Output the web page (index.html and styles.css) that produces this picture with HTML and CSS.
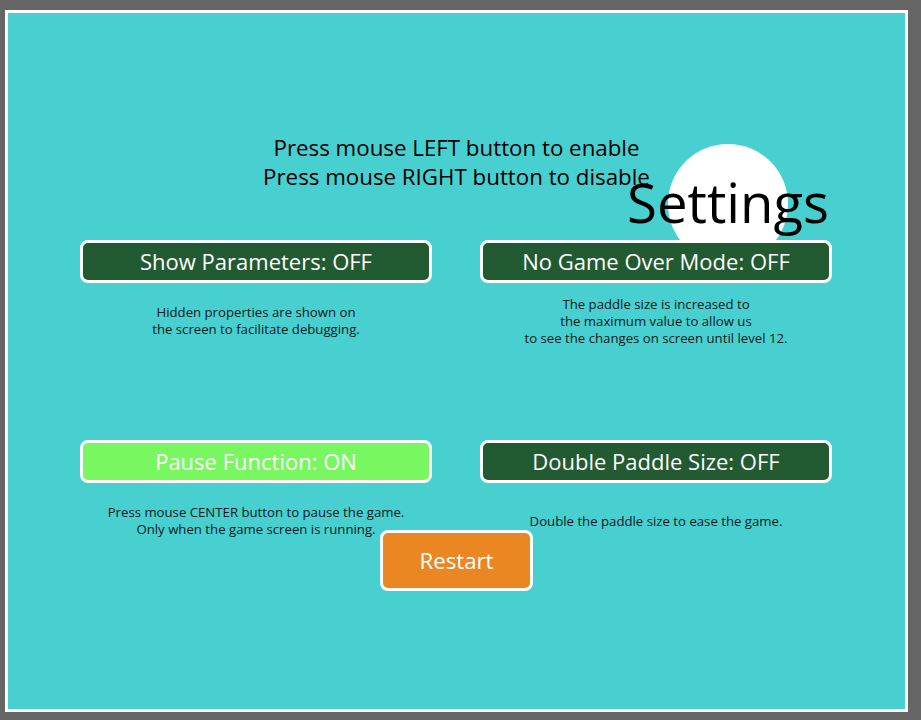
FILE: index.html
```html
<!DOCTYPE html>
<html>
<head>
<meta charset="utf-8">
<link rel="stylesheet" href="styles.css">
</head>
<body>
<div class="frame">
  <div class="title-deco">
    <div class="circle"></div>
    <div class="title">Settings</div>
  </div>
  <div class="heading">
    <div>Press mouse LEFT button to enable</div>
    <div>Press mouse RIGHT button to disable</div>
  </div>
  <div class="grid">
    <div class="cell">
      <div class="toggle off">Show Parameters: OFF</div>
      <div class="desc">Hidden properties are shown on<br>the screen to facilitate debugging.</div>
    </div>
    <div class="cell">
      <div class="toggle off">No Game Over Mode: OFF</div>
      <div class="desc">The paddle size is increased to<br>the maximum value to allow us<br>to see the changes on screen until level 12.</div>
    </div>
    <div class="cell">
      <div class="toggle on">Pause Function: ON</div>
      <div class="desc">Press mouse CENTER button to pause the game.<br>Only when the game screen is running.</div>
    </div>
    <div class="cell">
      <div class="toggle off">Double Paddle Size: OFF</div>
      <div class="desc">Double the paddle size to ease the game.</div>
    </div>
  </div>
  <div class="restart">Restart</div>
</div>
</body>
</html>
```

FILE: styles.css
```css
html, body {
  margin: 0;
  padding: 0;
}
body {
  background: #666666;
  width: 921px;
  height: 720px;
  overflow: hidden;
  padding: 10px 0 0 5px;
  box-sizing: border-box;
  font-family: "Open Sans", "Noto Sans", sans-serif;
}
.frame {
  position: relative;
  width: 897px;
  height: 696px;
  border: 3px solid #ffffff;
  background: #48cfd0;
}
.title-deco {
  position: absolute;
  left: 0;
  top: 0;
  width: 100%;
  height: 0;
}
.circle {
  position: absolute;
  left: 660px;
  top: 131px;
  width: 120px;
  height: 120px;
  border-radius: 50%;
  background: #ffffff;
}
.title {
  position: absolute;
  left: 619px;
  top: 162px;
  font-size: 54.5px;
  line-height: 54px;
  color: #000;
  white-space: nowrap;
}
.heading {
  position: relative;
  padding-top: 120px;
  text-align: center;
  font-size: 22.3px;
  line-height: 29px;
  color: #000;
}
.grid {
  position: relative;
  z-index: 1;
  margin-top: 49px;
  padding: 0 72px;
  display: grid;
  grid-template-columns: 352px 352px;
  column-gap: 48px;
  row-gap: 81px;
}
.cell {
  display: flex;
  flex-direction: column;
}
.toggle {
  height: 43px;
  box-sizing: border-box;
  border: 3px solid #ffffff;
  border-radius: 8px;
  color: #ffffff;
  font-size: 22px;
  line-height: 37px;
  text-align: center;
}
.toggle.off {
  background: #225a31;
}
.toggle.on {
  background: #78f760;
}
.desc {
  height: 76px;
  display: flex;
  flex-direction: column;
  justify-content: center;
  text-align: center;
  font-size: 13.2px;
  line-height: 17px;
  color: #0d1a1a;
}
.restart {
  position: relative;
  z-index: 2;
  width: 153px;
  height: 61px;
  box-sizing: border-box;
  margin: -29px auto 0;
  border: 3px solid #ffffff;
  border-radius: 8px;
  background: #ea8723;
  color: #ffffff;
  font-size: 22.2px;
  line-height: 55px;
  text-align: center;
}
```
